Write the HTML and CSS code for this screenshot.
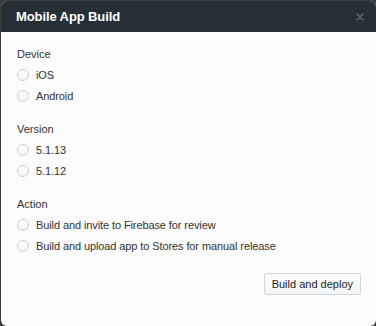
FILE: index.html
```html
<!DOCTYPE html>
<html lang="en">
<head>
    <meta charset="UTF-8">
    <meta name="viewport" content="width=device-width, initial-scale=1.0">
    <title>Mobile App Build</title>
    <link rel="stylesheet" href="styles.css">
</head>
<body>
    <div class="modal">
        <div class="modal-header">
            <h1>Mobile App Build</h1>
            <button class="close-btn" aria-label="Close">
                <svg width="8" height="8" viewBox="0 0 8 8">
                    <path d="M1 1L7 7M7 1L1 7" stroke="#5d6d77" stroke-width="1.5" stroke-linecap="round"/>
                </svg>
            </button>
        </div>

        <div class="modal-body">
            <div class="group">
                <div class="group-label">Device</div>
                <label class="radio"><input type="radio" name="device"><span class="dot"></span>iOS</label>
                <label class="radio"><input type="radio" name="device"><span class="dot"></span>Android</label>
            </div>

            <div class="group">
                <div class="group-label">Version</div>
                <label class="radio"><input type="radio" name="version"><span class="dot"></span>5.1.13</label>
                <label class="radio"><input type="radio" name="version"><span class="dot"></span>5.1.12</label>
            </div>

            <div class="group">
                <div class="group-label">Action</div>
                <label class="radio"><input type="radio" name="action"><span class="dot"></span>Build and invite to Firebase for review</label>
                <label class="radio"><input type="radio" name="action"><span class="dot"></span>Build and upload app to Stores for manual release</label>
            </div>

            <div class="actions">
                <button class="deploy-btn">Build and deploy</button>
            </div>
        </div>
    </div>
</body>
</html>
```

FILE: styles.css
```css
html, body {
    margin: 0;
    height: 100%;
}
body {
    background-color: #3b3d3f;
    font-family: "Liberation Sans", Arial, sans-serif;
    color: #333;
    overflow: hidden;
}
.modal {
    margin: 1px 0 0 1px;
    width: 375px;
    height: 325px;
    border-radius: 6px;
    overflow: hidden;
    background-color: #fcfcfc;
}
.modal-header {
    height: 31px;
    background-color: #252f35;
    display: flex;
    align-items: center;
    justify-content: space-between;
    padding: 0 12px 0 15px;
}
.modal-header h1 {
    margin: 0;
    font-size: 13px;
    font-weight: bold;
    color: #fff;
    letter-spacing: -0.1px;
}
.close-btn {
    background: none;
    border: none;
    padding: 0;
    width: 8px;
    height: 8px;
    display: flex;
    cursor: pointer;
}
.modal-body {
    padding: 16px 15px 0 16px;
}
.group {
    margin-bottom: 17px;
}
.group-label {
    font-size: 11px;
    line-height: 13px;
    margin-bottom: 4px;
}
.radio {
    display: flex;
    align-items: center;
    height: 20.5px;
    font-size: 11px;
    letter-spacing: -0.1px;
    cursor: pointer;
}
.radio input {
    display: none;
}
.dot {
    width: 10px;
    height: 10px;
    border: 1px solid #cfcfcf;
    border-radius: 50%;
    background: linear-gradient(#fff, #f4f4f4);
    margin-right: 7px;
    flex-shrink: 0;
}
.actions {
    display: flex;
    justify-content: flex-end;
    margin-top: 1px;
}
.deploy-btn {
    font-family: inherit;
    font-size: 11px;
    color: #222;
    background: linear-gradient(#fbfcfd, #f3f5f7);
    border: 1px solid #d0d4d8;
    border-radius: 3px;
    height: 22px;
    padding: 0 7px;
    cursor: pointer;
}
```
